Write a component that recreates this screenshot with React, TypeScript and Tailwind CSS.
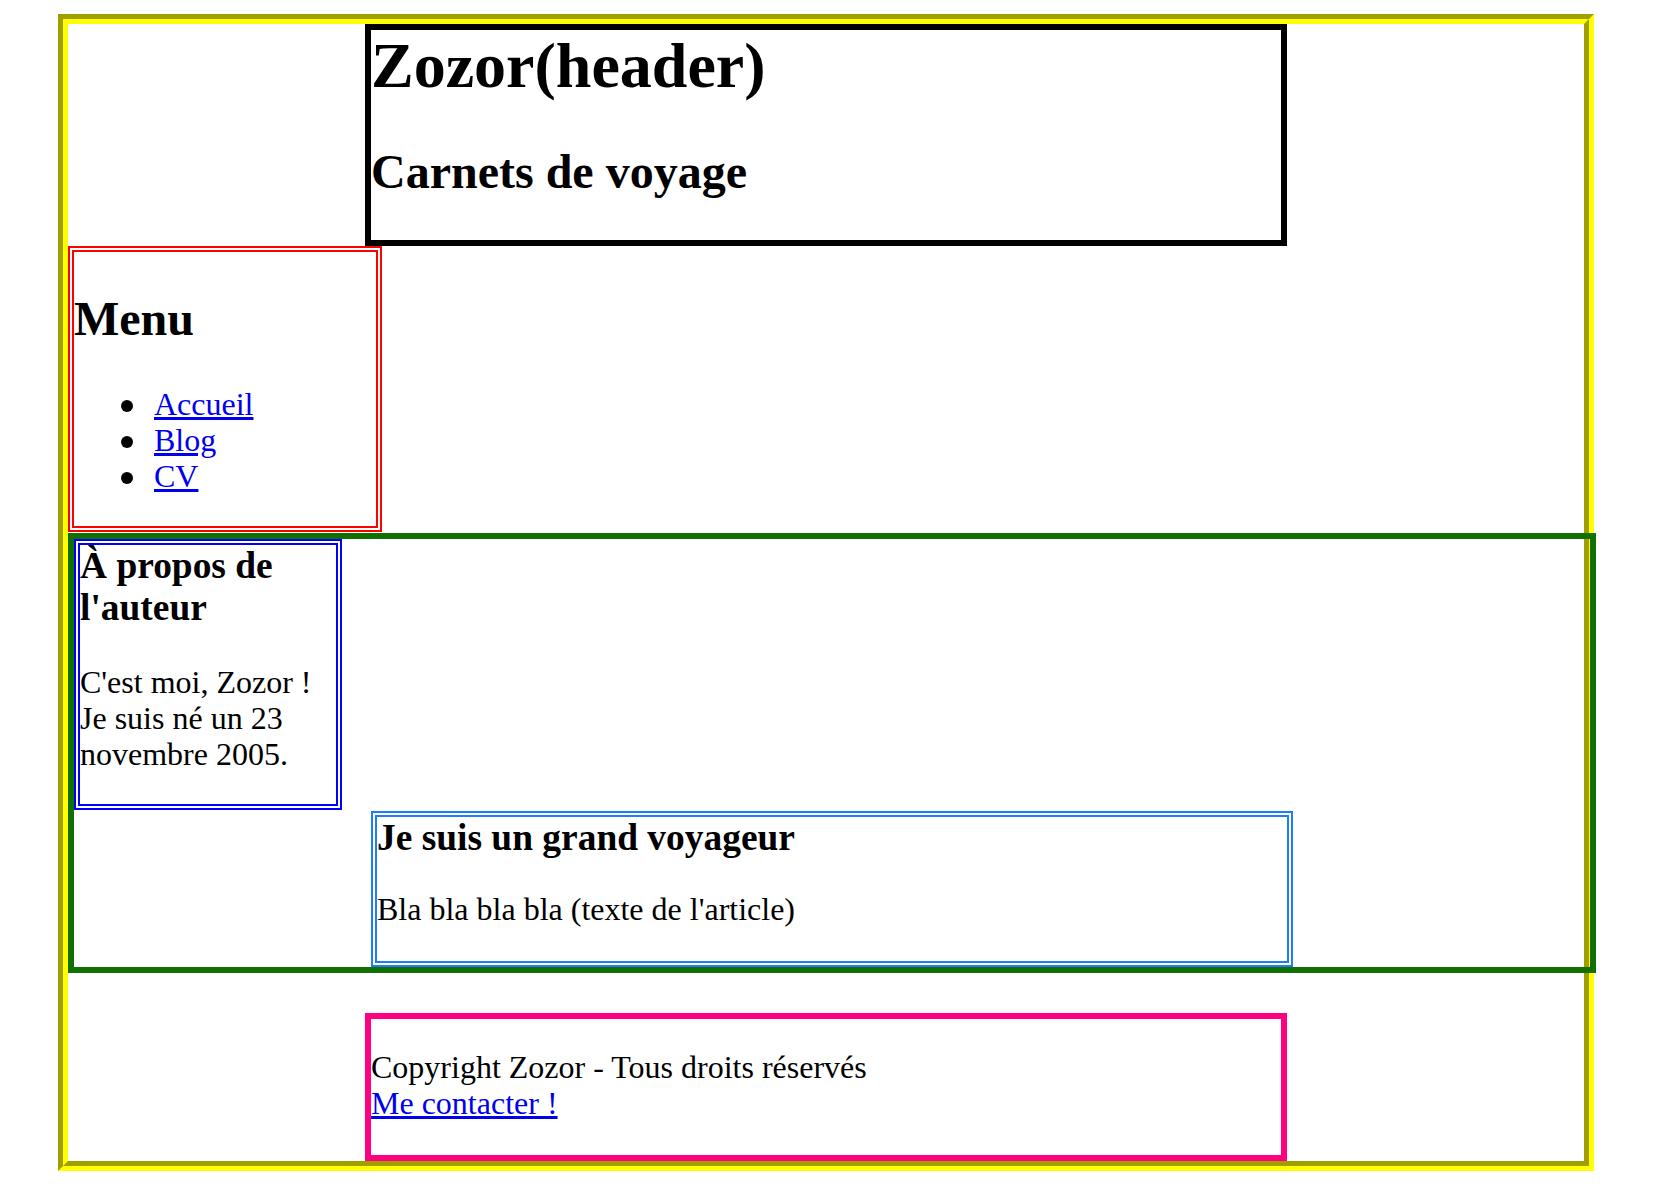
import React from "react";

const items = ["Accueil", "Blog", "CV"];

export default function App() {
  return (
    <div className="min-h-screen bg-white pt-[14px] pl-[58px] text-black [font-family:'Liberation_Serif','Times_New_Roman',serif] text-[32px] leading-[36px]">
      {/* body with groove yellow border */}
      <div className="w-[1536px] border-[5px] border-t-[#9f9f00] border-l-[#9f9f00] border-b-[#ffff00] border-r-[#ffff00]">
        <div className="border-[5px] border-t-[#ffff00] border-l-[#ffff00] border-b-[#9f9f00] border-r-[#9f9f00]">
          {/* header */}
          <header className="mx-auto w-[922px] border-[6px] border-solid border-black">
            <h1 className="m-0 text-[64px] leading-[72px] font-bold">Zozor(header)</h1>
            <h2 className="mt-[43px] mb-[41px] text-[48px] leading-[54px] font-bold">Carnets de voyage</h2>
          </header>

          {/* nav */}
          <nav className="w-[314px] border-[6px] border-double border-[#ff0000]">
            <h2 className="mt-[40px] text-[48px] leading-[54px] font-bold">Menu</h2>
            <ul className="mt-[40px] mb-[32px] list-none pl-[47px]">
              {items.map((it) => (
                <li key={it} className="flex items-start">
                  <span className="mt-[14px] h-[12px] w-[12px] shrink-0 rounded-full bg-black" />
                  <a href="#" className="ml-[21px] text-[#0000ee] underline">
                    {it}
                  </a>
                </li>
              ))}
            </ul>
          </nav>

          {/* section */}
          <section className="mt-[1px] w-[1528px] border-[6px] border-solid border-[#117000]">
            <aside className="w-[268px] border-[6px] border-double border-[#0000ff]">
              <h3 className="m-0 mb-[35px] text-[37.44px] leading-[42px] font-bold">À propos de l'auteur</h3>
              <p className="mb-[32px]">C'est moi, Zozor ! Je suis né un 23 novembre 2005.</p>
            </aside>
            <article className="mt-[1px] mx-auto w-[922px] border-[6px] border-double border-[#1f7bff]">
              <h3 className="m-0 mb-[32px] text-[37.44px] leading-[42px] font-bold">Je suis un grand voyageur</h3>
              <p className="mb-[34px]">Bla bla bla bla (texte de l'article)</p>
            </article>
          </section>

          {/* footer */}
          <footer className="mt-[40px] mx-auto w-[922px] border-[6px] border-solid border-[#ff0080]">
            <p className="mt-[30px] mb-[34px]">
              Copyright Zozor - Tous droits réservés
              <br />
              <a href="#" className="text-[#0000ee] underline">Me contacter !</a>
            </p>
          </footer>
        </div>
      </div>
    </div>
  );
}
